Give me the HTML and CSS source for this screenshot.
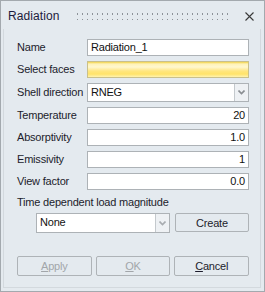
FILE: index.html
```html
<!DOCTYPE html>
<html>
<head>
    <title>Radiation</title>
    <link rel="stylesheet" href="styles.css">
</head>
<body>
    <div class="dialog">
        <div class="titlebar">
            <span class="title">Radiation</span>
            <span class="grip"></span>
            <svg class="close" width="9" height="9" viewBox="0 0 9 9">
                <path d="M0.5 0.5 L8.5 8.5 M8.5 0.5 L0.5 8.5" stroke="#3a3a3a" stroke-width="1.1" fill="none"/>
            </svg>
        </div>

        <div class="panel">
            <div class="form">
                <label>Name</label>
                <div class="field">Radiation_1</div>

                <label>Select faces</label>
                <div class="field faces"></div>

                <label class="tall-label">Shell direction</label>
                <div class="combo tall">
                    <div class="combo-text">RNEG</div>
                    <div class="combo-btn"><svg width="7" height="5" viewBox="0 0 7 5"><path d="M0.5 0.5 L3.5 3.5 L6.5 0.5" stroke="#8a8e92" stroke-width="1.6" fill="none"/></svg></div>
                </div>

                <label>Temperature</label>
                <div class="field num">20</div>

                <label>Absorptivity</label>
                <div class="field num">1.0</div>

                <label>Emissivity</label>
                <div class="field num">1</div>

                <label>View factor</label>
                <div class="field num">0.0</div>
            </div>

            <div class="load-label">Time dependent load magnitude</div>
            <div class="load-row">
                <div class="combo load">
                    <div class="combo-text">None</div>
                    <div class="combo-btn"><svg width="7" height="5" viewBox="0 0 7 5"><path d="M0.5 0.5 L3.5 3.5 L6.5 0.5" stroke="#a8acb0" stroke-width="1.6" fill="none"/></svg></div>
                </div>
                <button class="btn create">Create</button>
            </div>

            <div class="actions">
                <button class="btn" disabled><u>A</u>pply</button>
                <button class="btn" disabled><u>O</u>K</button>
                <button class="btn"><u>C</u>ancel</button>
            </div>
        </div>
    </div>
</body>
</html>
```

FILE: styles.css
```css
body { margin: 0; font-family: "Liberation Sans", Arial, sans-serif; }
.dialog {
    width: 265px;
    height: 292px;
    box-sizing: border-box;
    border: 1px solid #a3a9ae;
    background: #e4eaef;
    color: #1c1c2c;
    display: flex;
    flex-direction: column;
}
.titlebar {
    height: 28px;
    display: flex;
    align-items: center;
    padding: 0 10px 0 7px;
}
.title { font-size: 12px; letter-spacing: 0.1px; color: #1c1c3c; padding-top: 2px; }
.grip {
    flex: 1;
    height: 8px;
    margin: 2px 13px 0 16px;
    background-image: radial-gradient(circle, #8c9298 0.9px, transparent 1.1px);
    background-size: 5px 6px;
    background-position: -1px -1px;
}
.close { margin-top: 2px; }
.panel {
    flex: 1;
    margin: 0 3px 3px 2px;
    border: 1px solid #d3d9de;
    border-top: none;
    padding: 10px 11px 0 13px;
    display: flex;
    flex-direction: column;
}
.form {
    display: grid;
    grid-template-columns: 70px 162px;
    row-gap: 5px;
    font-size: 11px;
    letter-spacing: -0.2px;
}
label { line-height: 17px; white-space: nowrap; }
.tall-label { line-height: 19px; }
.field {
    height: 17px;
    box-sizing: border-box;
    border: 1px solid #adb2b6;
    background: #fff;
    line-height: 15px;
    padding: 0 3px;
    color: #111;
}
.num { text-align: right; }
.faces {
    border-color: #c9c08c;
    background: linear-gradient(#f1d24a 0, #fff3b8 2px, #fff7cf 5px, #ffe680 9px, #ffe36a 12px, #fff3b0 15px);
}
.combo {
    display: flex;
    box-sizing: border-box;
    border: 1px solid #adb2b6;
    background: #fff;
    font-size: 11px;
    letter-spacing: -0.2px;
}
.tall { height: 19px; }
.combo-text { flex: 1; padding: 0 3px; line-height: 17px; color: #111; }
.combo-btn {
    width: 14px;
    box-sizing: border-box;
    border-left: 1px solid #c4c9cd;
    background: #eef1f4;
    display: flex;
    align-items: center;
    justify-content: center;
}
.load-label { font-size: 11px; letter-spacing: -0.2px; margin-top: 5px; line-height: 15px; }
.load-row {
    display: flex;
    gap: 5px;
    margin-top: 3px;
    padding-left: 19px;
}
.load { width: 134px; height: 20px; }
.btn {
    font-family: "Liberation Sans", Arial, sans-serif;
    font-size: 11px;
    letter-spacing: -0.2px;
    background: #e4eaef;
    border: 1px solid #aeb3b7;
    border-radius: 2px;
    color: #1c1c2c;
    padding: 0;
    height: 20px;
}
.create { width: 74px; height: 19px; }
.btn:disabled { color: #a2a6aa; }
.actions {
    display: flex;
    gap: 4px;
    margin-top: 23px;
}
.actions .btn { width: 75px; height: 20px; }
```
